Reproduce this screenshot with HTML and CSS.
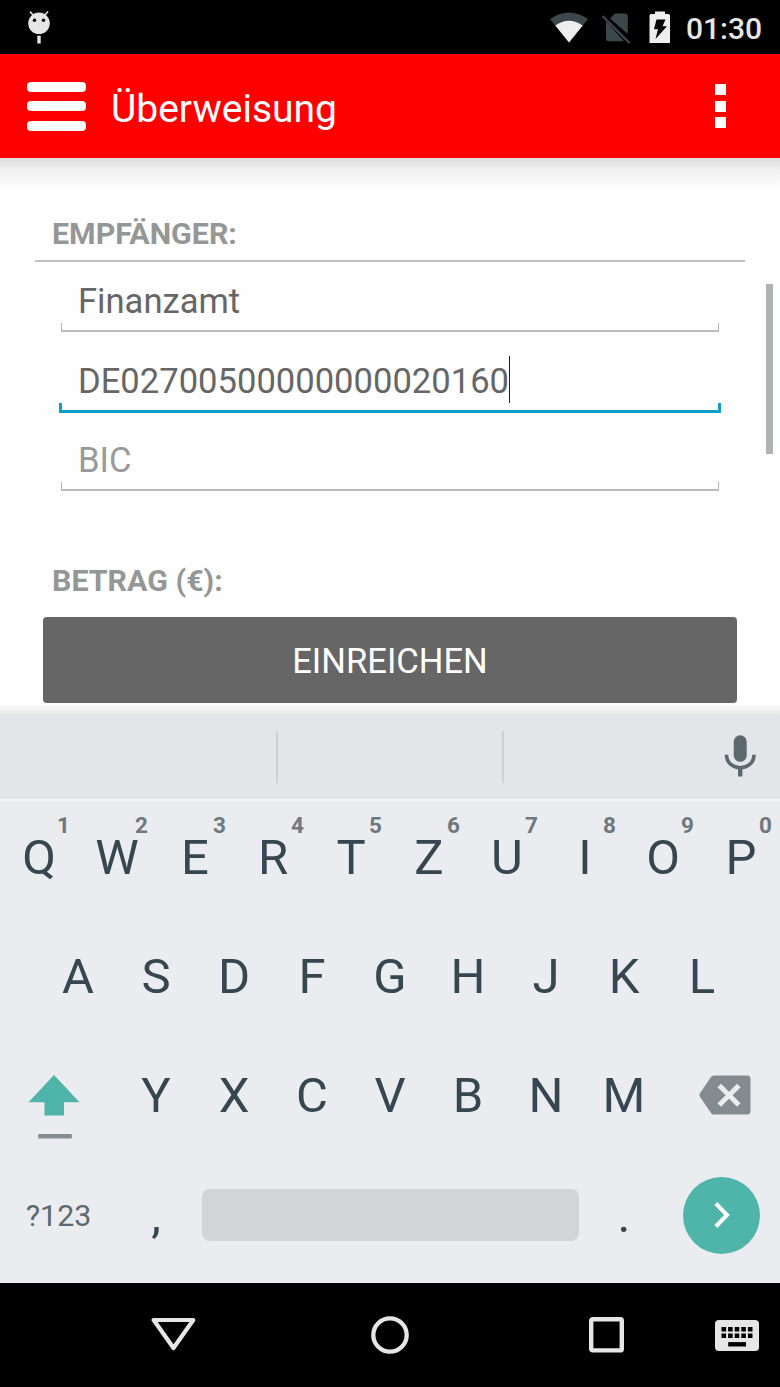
FILE: index.html
```html
<!DOCTYPE html>
<html lang="de">
<head>
  <meta charset="UTF-8" />
  <meta name="viewport" content="width=device-width, initial-scale=1.0" />
  <title>Überweisung</title>
  <link rel="stylesheet" href="styles.css">
</head>
<body>
  <div class="status-bar">
    <svg class="debug-icon" width="24" height="36" viewBox="0 0 24 36">
      <path d="M3 1.5L6 5M21 1.5L18 5" stroke="#e6e6e6" stroke-width="1.6" />
      <circle cx="12" cy="13.3" r="10.8" fill="#e6e6e6" />
      <circle cx="7.5" cy="10.2" r="1.7" fill="#000" />
      <circle cx="16.5" cy="10.2" r="1.7" fill="#000" />
      <path d="M12 25.7V33.5" stroke="#e6e6e6" stroke-width="3.4" />
    </svg>
    <div class="status-icons">
      <svg width="40" height="34" viewBox="0 0 40 34">
        <path d="M1 9Q20 -4 39 9L20 32.5Z" fill="#3c474c" />
        <path d="M6.3 15.5Q20 6 33.7 15.5L20 32.5Z" fill="#eee" />
      </svg>
      <svg class="sim-icon" width="30" height="32" viewBox="0 0 30 32">
        <path d="M9 6.5L14 1.5H24.5Q26.8 1.5 26.8 4V22Z" fill="#3c474c" />
        <path d="M5 9L23 29.3H7.5Q5 29.3 5 27Z" fill="#3c474c" />
        <path d="M1.5 4L28.5 31" stroke="#3c474c" stroke-width="2.4" />
      </svg>
      <svg class="battery-icon" width="22" height="33" viewBox="0 0 22 33">
        <path d="M6 0.5H16V3H19.5Q21 3 21 4.5V32H0.5V4.5Q0.5 3 2 3H6Z" fill="#eee" />
        <path d="M7.5 8.5H16.5L13.5 15.3H18L6.5 28L9 18.3H5Z" fill="#000" />
      </svg>
      <span class="clock">01:30</span>
    </div>
  </div>

  <header class="app-bar">
    <div class="menu-icon"><i></i><i></i><i></i></div>
    <h1>Überweisung</h1>
    <div class="more-icon"><i></i><i></i><i></i></div>
  </header>

  <main class="form">
    <h2 class="section-title">Empfänger:</h2>
    <div class="field">
      <span>Finanzamt</span>
      <div class="underline"></div>
    </div>
    <div class="field focused">
      <span>DE02700500000000020160<i class="caret"></i></span>
      <div class="underline"></div>
    </div>
    <div class="field placeholder">
      <span>BIC</span>
      <div class="underline"></div>
    </div>
    <h2 class="section-title amount">Betrag (€):</h2>
    <div class="submit">EINREICHEN</div>
    <div class="scrollbar"></div>
  </main>

  <section class="keyboard">
    <div class="suggestions">
      <div></div>
      <div></div>
      <div>
        <svg width="32" height="42" viewBox="0 0 32 42">
          <rect x="9.7" y="0.3" width="13" height="26.5" rx="6.5" fill="#5c6a6f" />
          <path d="M2.5 19.7C2.5 37 30 37 30 19.7" fill="none" stroke="#5c6a6f" stroke-width="3.6" />
          <path d="M16.2 33V41.5" stroke="#5c6a6f" stroke-width="4.4" />
        </svg>
      </div>
    </div>

    <div class="keys">
      <div class="row">
        <div class="key">Q<sup>1</sup></div>
        <div class="key">W<sup>2</sup></div>
        <div class="key">E<sup>3</sup></div>
        <div class="key">R<sup>4</sup></div>
        <div class="key">T<sup>5</sup></div>
        <div class="key">Z<sup>6</sup></div>
        <div class="key">U<sup>7</sup></div>
        <div class="key">I<sup>8</sup></div>
        <div class="key">O<sup>9</sup></div>
        <div class="key">P<sup>0</sup></div>
      </div>
      <div class="row">
        <div class="key">A</div>
        <div class="key">S</div>
        <div class="key">D</div>
        <div class="key">F</div>
        <div class="key">G</div>
        <div class="key">H</div>
        <div class="key">J</div>
        <div class="key">K</div>
        <div class="key">L</div>
      </div>
      <div class="row">
        <div class="key shift">
          <svg width="52" height="64" viewBox="0 0 52 64">
            <path d="M26 0L51.5 27.3H36V40.5H16.5V27.3H0.5Z" fill="#4fb5ab" />
            <rect x="10.3" y="59" width="33.5" height="4.5" fill="#848e92" />
          </svg>
        </div>
        <div class="key">Y</div>
        <div class="key">X</div>
        <div class="key">C</div>
        <div class="key">V</div>
        <div class="key">B</div>
        <div class="key">N</div>
        <div class="key">M</div>
        <div class="key delete">
          <svg width="52" height="40" viewBox="0 0 52 40">
            <path d="M15 0.5H48.5Q51.5 0.5 51.5 3.5V36.5Q51.5 39.5 48.5 39.5H15Q13 39.5 12 38L0.8 21.5Q0 20 0.8 18.5L12 2Q13 0.5 15 0.5Z" fill="#848b8f" />
            <path d="M20.3 10.5L39.8 30M39.8 10.5L20.3 30" stroke="#ebecf0" stroke-width="4.9" />
          </svg>
        </div>
      </div>
      <div class="row">
        <div class="key symbols">?123</div>
        <div class="key">,</div>
        <div class="space"></div>
        <div class="key">.</div>
        <div class="enter">
          <svg width="16" height="27" viewBox="0 0 16 27">
            <path d="M1.8 1.5L13 13L1.8 24.5" fill="none" stroke="#fff" stroke-width="4" />
          </svg>
        </div>
      </div>
    </div>
  </section>

  <nav class="nav-bar">
    <svg width="46" height="36" viewBox="0 0 46 36">
      <path d="M2.7 3H42.3L22.5 31Z" fill="none" stroke="#e6e6e6" stroke-width="4.2" stroke-linejoin="round" />
    </svg>
    <svg width="38" height="38" viewBox="0 0 38 38">
      <circle cx="19" cy="19" r="16.7" fill="none" stroke="#e6e6e6" stroke-width="4.3" />
    </svg>
    <svg width="35" height="36" viewBox="0 0 35 36">
      <rect x="2.2" y="2.2" width="30.6" height="31.2" rx="1.5" fill="none" stroke="#e6e6e6" stroke-width="4.4" />
    </svg>
    <svg width="44" height="31" viewBox="0 0 44 31">
      <rect width="44" height="31" rx="4" fill="#e6e6e6" />
      <path d="M6.5 9.2H37.5M6.5 15.7H37.5" stroke="#000" stroke-width="4.6" stroke-dasharray="4.6 2" />
      <path d="M13.2 24.3H31" stroke="#000" stroke-width="4.4" />
    </svg>
  </nav>
</body>
</html>
```

FILE: styles.css
```css
* { box-sizing: border-box; margin: 0; padding: 0; }
body {
  font-family: Roboto, sans-serif;
  width: 780px;
  height: 1387px;
  display: flex;
  flex-direction: column;
  background: #fefefe;
  overflow: hidden;
}
svg { display: block; flex: none; }

.status-bar {
  height: 54px;
  display: flex;
  align-items: center;
  justify-content: space-between;
  padding: 0 18px 0 27px;
  background: #000;
}
.debug-icon { margin-top: 2px; }
.status-icons { display: flex; align-items: center; }
.sim-icon { margin: 2px 0 0 12px; }
.battery-icon { margin: 0 15px 0 18px; }
.clock {
  color: #e6e6e6;
  font-size: 30px;
  font-weight: 500;
  line-height: 54px;
  padding-top: 4px;
}

.app-bar {
  height: 104px;
  display: flex;
  align-items: center;
  padding: 0 54px 0 27px;
  background: #ff0000;
  color: #fff;
}
.app-bar h1 {
  flex: 1;
  margin-left: 25px;
  padding-top: 5px;
  font-size: 39px;
  font-weight: 400;
}
.menu-icon { display: flex; flex-direction: column; gap: 9.5px; width: 59px; }
.menu-icon i { height: 10px; border-radius: 4px; background: #fff; }
.more-icon { display: flex; flex-direction: column; gap: 5.5px; width: 11px; }
.more-icon i { height: 11px; background: #fff; }

.form {
  position: relative;
  height: 556px;
  padding-top: 55px;
  background:
    linear-gradient(#dcdcde, #f1f1f1 12px, #fefefe 32px) top / 100% 32px no-repeat,
    linear-gradient(#fefefe, #e8e8e8) bottom / 100% 10px no-repeat,
    #fefefe;
}
.section-title {
  height: 49px;
  margin: 0 35px;
  padding-left: 17px;
  border-bottom: 2px solid #c0c1c3;
  color: #959796;
  font-size: 30.4px;
  font-weight: 700;
  line-height: 42px;
  text-transform: uppercase;
}
.section-title.amount { margin-top: 69px; border: 0; }
.field {
  display: flex;
  flex-direction: column;
  justify-content: flex-end;
  height: 70px;
  margin: 0 60px;
  color: #666;
  font-size: 34.6px;
}
.field span { display: flex; align-items: center; padding: 2px 0 0 18px; height: 47px; }
.field .underline {
  height: 9px;
  border: 1px solid #b3b5b5;
  border-width: 0 1px 2px;
  border-bottom-color: #bbbdbd;
  margin: 0 1px;
}
.field.focused { height: 81px; margin: 0 59px; }
.field.focused span { padding-left: 19px; }
.field.focused .underline { height: 10px; margin: 0; border: 3px solid #0f9dcb; border-top: 0; }
.field.placeholder { height: 78px; color: #999; }
.caret { width: 1px; height: 47px; margin-top: -2px; background: #222; }
.submit {
  height: 86px;
  margin: 8px 43px 0;
  border-radius: 4px;
  background: #666;
  color: #fff;
  font-size: 34.6px;
  line-height: 89px;
  text-align: center;
}
.scrollbar {
  position: absolute;
  top: 126px;
  right: 7px;
  width: 7px;
  height: 170px;
  background: #b1b3b3;
}

.keyboard { height: 569px; background: #ebecf0; }
.suggestions {
  height: 87px;
  display: flex;
  align-items: center;
  background: #e3e5e8;
  border-bottom: 2px solid #f3f4f4;
}
.suggestions div { height: 52px; border-right: 2px solid #ccd1d4; }
.suggestions div:nth-child(1) { width: 278px; }
.suggestions div:nth-child(2) { width: 226px; }
.suggestions div:nth-child(3) {
  flex: 1;
  display: flex;
  align-items: center;
  justify-content: flex-end;
  padding: 0 24px 2px 0;
  border: 0;
}

.keys { margin-top: -3px; }
.row { height: 119.2px; display: flex; align-items: center; justify-content: center; }
.key {
  position: relative;
  width: 78px;
  color: #37474f;
  font-size: 49px;
  line-height: 119px;
  text-align: center;
}
.key sup {
  position: absolute;
  top: 16px;
  right: 0;
  width: 29px;
  color: #6f797d;
  font-size: 22.5px;
  font-weight: 700;
  line-height: 22px;
}
.key.shift { width: 117px; padding: 22px 0 0 28px; }
.key.delete { width: 117px; padding: 0 0 2px 36px; }
.key.symbols { width: 117px; color: #5c6a6f; font-size: 30.3px; }
.space {
  width: 377px;
  height: 52px;
  margin: 0 6.5px;
  border-radius: 8px;
  background: #d1d5d8;
}
.enter {
  display: flex;
  align-items: center;
  justify-content: center;
  width: 77px;
  height: 77px;
  margin: 0 20px;
  border-radius: 50%;
  background: #4fb5ab;
}

.nav-bar {
  flex: 1;
  display: flex;
  align-items: center;
  padding-left: 151px;
  background: #000;
}
.nav-bar svg:nth-child(2) { margin-left: 174px; }
.nav-bar svg:nth-child(3) { margin-left: 180px; }
.nav-bar svg:nth-child(4) { margin-left: 91px; }
```
